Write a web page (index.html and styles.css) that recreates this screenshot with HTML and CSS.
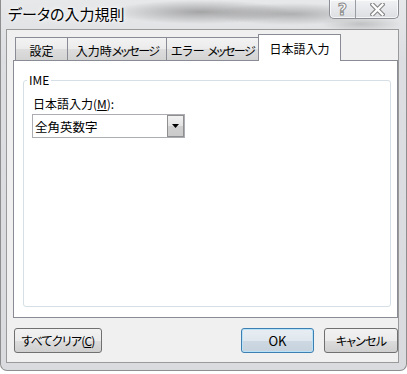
FILE: index.html
```html
<!DOCTYPE html>
<html lang="ja">
<head>
    <meta charset="UTF-8">
    <title>データの入力規則</title>
    <link rel="stylesheet" href="styles.css">
</head>
<body>
    <div class="window">
        <!-- タイトルバー -->
        <div class="titlebar">
            <span class="title">データの入力規則</span>
            <div class="caption">
                <span class="cap help">?</span>
                <span class="cap close">
                    <svg width="15" height="13" viewBox="0 0 15 13">
                        <path d="M2.5 1.5 L12.5 11.5 M12.5 1.5 L2.5 11.5" stroke="#8a8a8a" stroke-width="4.5" stroke-linecap="square"/>
                        <path d="M2.5 1.5 L12.5 11.5 M12.5 1.5 L2.5 11.5" stroke="#ffffff" stroke-width="2.2" stroke-linecap="square"/>
                    </svg>
                </span>
            </div>
        </div>
        <!-- クライアント領域 -->
        <div class="client">
            <div class="tabs">
                <div class="tab t1">設定</div>
                <div class="tab t2">入力時<span class="kana">メッセージ</span></div>
                <div class="tab t3">エラー <span class="kana">メッセージ</span></div>
                <div class="tab t4 active">日本語入力</div>
            </div>
            <div class="panel">
                <fieldset class="group">
                    <legend>IME</legend>
                    <div class="label">日本語入力(<u>M</u>):</div>
                    <div class="combo">
                        <span class="combo_text">全角英数字</span>
                        <span class="drop">
                            <svg width="7" height="4" viewBox="0 0 7 4"><path d="M0 0 H7 L3.5 4 Z" fill="#000"/></svg>
                        </span>
                    </div>
                </fieldset>
            </div>
            <div class="buttons">
                <button class="btn clear">すべてクリア(<u>C</u>)</button>
                <button class="btn ok">OK</button>
                <button class="btn cancel">キャンセル</button>
            </div>
        </div>
    </div>
</body>
</html>
```

FILE: styles.css
```css
*{
    margin: 0;
    padding: 0;
    box-sizing: border-box;
}
body{
    width: 407px;
    height: 374px;
    overflow: hidden;
    background: #fff;
    font-family: "Noto Sans CJK JP", "Liberation Sans", sans-serif;
    font-size: 12px;
    font-feature-settings: "palt";
    color: #000;
}
.window{
    width: 407px;
    height: 371px;
    padding: 0 7px 8px 5px;
    border: 1px solid #8e8e8e;
    border-top: none;
    border-radius: 0 0 7px 7px;
    /* 背後のウィンドウがぼやけて見える部分 */
    background:
        radial-gradient(ellipse 90px 12px at 200px 12px, rgba(120,120,120,.6), rgba(120,120,120,0)),
        radial-gradient(ellipse 80px 11px at 290px 14px, rgba(130,130,130,.55), rgba(130,130,130,0)),
        radial-gradient(ellipse 40px 8px at 360px 24px, rgba(160,160,160,.5), rgba(160,160,160,0)),
        linear-gradient(#e7e8ea, #dcdee1 60px, #d9dbde);
}
/* タイトルバー */
.titlebar{
    height: 29px;
    display: flex;
    align-items: flex-start;
}
.title{
    margin: 4px 0 0 2px;
    font-size: 15px;
    line-height: 20px;
    text-shadow: 0 0 6px #fff, 0 0 3px #fff;
}
.caption{
    margin-left: auto;
    display: flex;
    height: 19px;
    border: 1px solid #8b8f95;
    border-top: none;
    border-radius: 0 0 5px 5px;
    background: linear-gradient(#f1f2f4, #dcdee2);
    box-shadow: inset 0 0 0 1px rgba(255,255,255,.7);
}
.cap{
    display: flex;
    align-items: center;
    justify-content: center;
}
.help{
    width: 26px;
    border-right: 1px solid #9a9ea4;
    font-family: "DejaVu Sans", sans-serif;
    font-size: 16px;
    font-weight: bold;
    color: #fff;
    -webkit-text-stroke: 1px #8a8a8a;
}
.close{
    width: 42px;
}
/* クライアント */
.client{
    height: 334px;
    border: 1px solid #9a9a9a;
    background: #f0f0f0;
    padding: 4px 0 0 6px;
}
.tabs{
    display: flex;
    height: 26px;
    padding-left: 2px;
    align-items: flex-end;
}
.tab{
    height: 23px;
    border: 1px solid #898c95;
    border-bottom: none;
    background: linear-gradient(#f3f3f3, #ebebeb 50%, #dddddd 51%, #d3d3d3);
    text-align: center;
    white-space: nowrap;
    padding-top: 3px;
    line-height: 20px;
    margin-left: -1px;
}
.tab .kana{
    letter-spacing: -1.6px;
}
.t1{ width: 53px; margin-left: 0; }
.t2{ width: 100px; }
.t3{ width: 93px; }
.t4{ width: 83px; }
.tab.active{
    height: 27px;
    background: #fff;
    margin-bottom: -1px;
    position: relative;
    line-height: 22px;
}
.panel{
    width: 385px;
    height: 258px;
    border: 1px solid #898c95;
    background: #fff;
    padding: 11px 6px 0 9px;
}
.group{
    height: 235px;
    border: 1px solid #d5dfe5;
    border-radius: 3px;
    padding: 0 0 0 9px;
}
.group legend{
    margin-left: -6px;
    padding: 0 2px;
    line-height: 16px;
}
.label{
    margin-top: 8px;
    line-height: 16px;
}
.combo{
    margin: 2px 0 0 -1px;
    width: 153px;
    height: 24px;
    border: 1px solid #abadb3;
    display: flex;
    align-items: center;
}
.combo_text{
    padding-left: 2px;
    flex: 1;
    font-size: 12.5px;
}
.drop{
    width: 17px;
    height: 22px;
    border: 1px solid #8f8f8f;
    background: linear-gradient(#f2f2f2, #e2e2e2 50%, #d0d0d0 51%, #cbcbcb);
    display: flex;
    align-items: center;
    justify-content: center;
}
/* 下部ボタン */
.buttons{
    display: flex;
    margin-top: 10px;
    padding-left: 1px;
}
.btn{
    height: 25px;
    border: 1px solid #707070;
    border-radius: 3px;
    background: linear-gradient(#f2f2f2, #ebebeb 50%, #dddddd 51%, #cfcfcf);
    font-family: inherit;
    font-size: 12px;
    font-feature-settings: "palt";
    letter-spacing: -0.8px;
    color: #000;
}
.clear{ width: 88px; }
.ok{
    width: 73px;
    margin-left: auto;
    font-size: 13px;
    letter-spacing: 0;
    border-color: #3c7fb1;
    box-shadow: inset 0 0 0 1px #b9e1f7;
    background: linear-gradient(#e8eef3, #dfe7ee 50%, #cdd8e2 51%, #c6d2dd);
}
.cancel{
    width: 74px;
    margin-left: 10px;
}
```
